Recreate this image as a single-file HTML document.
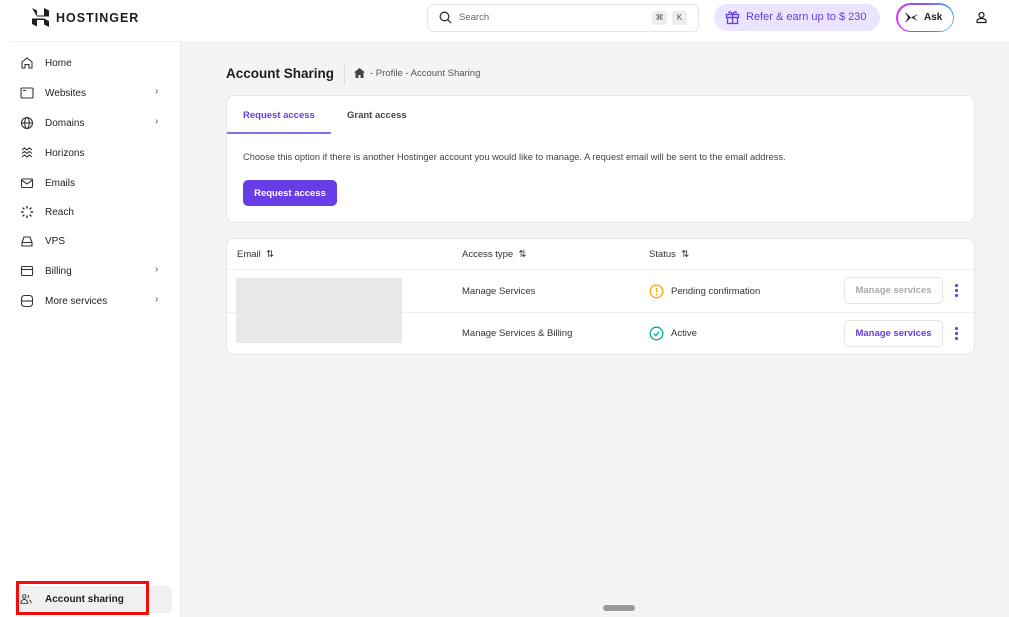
<!DOCTYPE html>
<html><head><meta charset="utf-8"><style>
*{box-sizing:border-box;margin:0;padding:0}
body{width:1009px;height:617px;overflow:hidden;font-family:"Liberation Sans",sans-serif;background:#fff;color:#1d1e20;position:relative}
.hdr{position:absolute;left:0;top:0;width:1009px;height:41px;background:#fff}
.side{position:absolute;left:0;top:41px;width:181px;height:576px;background:#fff;border-right:1px solid #e8e8ec}
.side .line{position:absolute;left:10px;right:0;top:0;border-top:1px solid #eee}
.main{position:absolute;left:181px;top:41px;right:0;bottom:0;background:#f4f4f4}
.nav{position:absolute;left:20px;font-size:10px;color:#2f1c6a;display:flex;align-items:center}
.nav svg{width:14px;height:14px;margin-right:11px}
.nav span{color:#1d1e20}
.chev{position:absolute;left:155px;font-size:10px;color:#555}
.card{position:absolute;background:#fff;border:1px solid #e6e6e6;border-radius:8px}
.t{position:absolute;font-size:9.5px;white-space:nowrap}
.btn{position:absolute;border:1px solid #e6e6e6;border-radius:5px;font-size:9.5px;font-weight:bold;display:flex;align-items:center;justify-content:center}
.dots{position:absolute;width:3px}
.dots i{display:block;width:2.5px;height:2.5px;border-radius:50%;background:#673de6;margin-bottom:2.5px}
</style></head><body>
<div class="hdr">
 <svg style="position:absolute;left:32px;top:8px" width="17" height="19" viewBox="0 0 17 19"><path d="M0 0l5 2.5v5l7 0V0l5 2.5V8.5H5zM0 10.5h12L17 13v6l-5-2.5v-4.5H5v6.5L0 16z" fill="#1d1e20"/></svg>
 <div class="t" style="left:56px;top:11px;font-size:12.5px;font-weight:bold;letter-spacing:1px">HOSTINGER</div>
 <div style="position:absolute;left:427px;top:4px;width:272px;height:28px;border:1px solid #e6e6e6;border-radius:7px"></div>
 <svg style="position:absolute;left:439px;top:11px" width="13" height="13" viewBox="0 0 13 13"><circle cx="5.5" cy="5.5" r="4.3" fill="none" stroke="#333" stroke-width="1.3"/><path d="M8.6 8.6l3.5 3.5" stroke="#333" stroke-width="1.3"/></svg>
 <div class="t" style="left:459px;top:12px;color:#666">Search</div>
 <div style="position:absolute;left:652px;top:11px;width:15px;height:14px;background:#eee;border-radius:3px;font-size:8px;text-align:center;line-height:14px;color:#555">⌘</div>
 <div style="position:absolute;left:672px;top:11px;width:15px;height:14px;background:#eee;border-radius:3px;font-size:8px;text-align:center;line-height:14px;color:#555">K</div>
 <div style="position:absolute;left:714px;top:4px;width:166px;height:27px;background:#ebe4ff;border-radius:14px"></div>
 <svg style="position:absolute;left:725px;top:10px" width="15" height="15" viewBox="0 0 15 15" fill="none" stroke="#673de6" stroke-width="1.3"><rect x="1.5" y="4.5" width="12" height="3"/><rect x="2.5" y="7.5" width="10" height="6"/><path d="M7.5 4.5v9M7.5 4.5C6 1 3 1.5 4 3.5M7.5 4.5C9 1 12 1.5 11 3.5"/></svg>
 <div class="t" style="left:746px;top:11px;font-size:11px;color:#673de6">Refer &amp; earn up to $ 230</div>
 <div style="position:absolute;left:896px;top:3px;width:58px;height:29px;border-radius:15px;background:linear-gradient(90deg,#d63af0,#7a5cff,#4fb0ff);padding:1.5px"><div style="width:100%;height:100%;background:#fff;border-radius:14px"></div></div>
 <svg style="position:absolute;left:905px;top:11px" width="13" height="13" viewBox="0 0 13 13"><path d="M0 1l6 5.5L0 12l3-5.5zM6 6.5L13 3 9 6.5 13 10z" fill="#1d1e20"/></svg>
 <div class="t" style="left:924px;top:12px;font-size:10px;font-weight:bold">Ask</div>
 <svg style="position:absolute;left:975px;top:11px" width="13" height="13" viewBox="0 0 13 13" fill="none" stroke="#1d1e20" stroke-width="1.2"><circle cx="6.5" cy="4" r="2.5"/><path d="M2 11.5h9v-1.5c0-1.5-2-2.5-4.5-2.5S2 8.5 2 10z"/></svg>
</div>
<div class="side"><div class="line"></div>
 <div style="position:absolute;left:15px;top:545px;width:157px;height:27px;background:#f0f0f0;border-radius:6px"></div>
</div>
<div class="nav" style="top:56px"><svg viewBox="0 0 14 14" fill="none" stroke="#333" stroke-width="1.1"><path d="M2 6l5-4 5 4v6H9V8.5H5V12H2z"/></svg><span>Home</span></div>
<div class="nav" style="top:86px"><svg viewBox="0 0 14 14" fill="none" stroke="#333" stroke-width="1.1"><rect x="1" y="2" width="12" height="10" rx="1"/><path d="M3 4.5h3"/></svg><span>Websites</span></div><div class="chev" style="top:86px">›</div>
<div class="nav" style="top:116px"><svg viewBox="0 0 14 14" fill="none" stroke="#333" stroke-width="1.1"><circle cx="7" cy="7" r="5.5"/><ellipse cx="7" cy="7" rx="2.3" ry="5.5"/><path d="M1.5 7h11"/></svg><span>Domains</span></div><div class="chev" style="top:116px">›</div>
<div class="nav" style="top:146px"><svg viewBox="0 0 14 14" fill="none" stroke="#333" stroke-width="1.1"><path d="M2 4l2.5-2 2.5 2 2.5-2L12 4M2 7.5l2.5-2 2.5 2 2.5-2L12 7.5M2 11l2.5-2 2.5 2 2.5-2L12 11"/></svg><span>Horizons</span></div>
<div class="nav" style="top:176px"><svg viewBox="0 0 14 14" fill="none" stroke="#333" stroke-width="1.1"><rect x="1.5" y="3" width="11" height="8.5" rx="1"/><path d="M1.5 4l5.5 4 5.5-4"/></svg><span>Emails</span></div>
<div class="nav" style="top:205px"><svg viewBox="0 0 14 14" fill="none" stroke="#333" stroke-width="1.4" stroke-linecap="round"><path d="M7 1.5v1.5M7 11v1.5M1.5 7h1.5M11 7h1.5M3 3l1 1M10 10l1 1M3 11l1-1M10 4l1-1"/></svg><span>Reach</span></div>
<div class="nav" style="top:234px"><svg viewBox="0 0 14 14" fill="none" stroke="#333" stroke-width="1.1"><path d="M2 8.5L4 3h6l2 5.5M2 8.5h10V12H2z"/></svg><span>VPS</span></div>
<div class="nav" style="top:264px"><svg viewBox="0 0 14 14" fill="none" stroke="#333" stroke-width="1.1"><rect x="1.5" y="2.5" width="11" height="9" rx="1"/><path d="M1.5 5.5h11"/></svg><span>Billing</span></div><div class="chev" style="top:264px">›</div>
<div class="nav" style="top:294px"><svg viewBox="0 0 14 14" fill="none" stroke="#333" stroke-width="1.1"><rect x="1.5" y="1.5" width="11" height="11" rx="3"/><path d="M1.5 7h11"/></svg><span>More services</span></div><div class="chev" style="top:294px">›</div>
<div class="nav" style="top:592px;font-weight:bold"><svg viewBox="0 0 14 14" fill="none" stroke="#333" stroke-width="1.1" style="width:12px"><circle cx="5" cy="4" r="2"/><path d="M1 12c0-3 2-4.5 4-4.5s4 1.5 4 4.5zM9 2.5a2 2 0 010 3.5M11 8c1 .7 2 2 2 4"/></svg><span style="margin-left:2px">Account sharing</span></div>
<div style="position:absolute;left:16px;top:581px;width:133px;height:34px;border:3px solid #f20c0c"></div>
<div class="main"></div>
<div class="t" style="left:226px;top:66px;font-size:13.5px;font-weight:bold">Account Sharing</div>
<div style="position:absolute;left:344px;top:63px;width:1px;height:22px;background:#ddd"></div>
<svg style="position:absolute;left:354px;top:68px" width="11" height="10" viewBox="0 0 11 10"><path d="M5.5 0L11 4.5H9.5V10h-3V7h-2v3h-3V4.5H0z" fill="#444"/></svg>
<div class="t" style="left:370px;top:68px;font-size:9.5px;color:#555">- Profile - Account Sharing</div>
<div class="card" style="left:226px;top:95px;width:749px;height:128px">
 <div class="t" style="left:16px;top:14px;color:#673de6;font-weight:bold;font-size:9.5px">Request access</div>
 <div style="position:absolute;left:0;top:36px;width:104px;height:2px;background:#8c6cf0"></div>
 <div class="t" style="left:120px;top:14px;color:#444;font-weight:bold;font-size:9.5px">Grant access</div>
 <div class="t" style="left:16px;top:56px;color:#444;font-size:9.3px">Choose this option if there is another Hostinger account you would like to manage. A request email will be sent to the email address.</div>
 <div class="btn" style="left:16px;top:84px;width:94px;height:26px;background:#673de6;border:none;color:#fff">Request access</div>
</div>
<div class="card" style="left:226px;top:238px;width:749px;height:117px">
 <div class="t" style="left:10px;top:10px;color:#333">Email &nbsp;⇅</div>
 <div class="t" style="left:235px;top:10px;color:#333">Access type &nbsp;⇅</div>
 <div class="t" style="left:422px;top:10px;color:#333">Status &nbsp;⇅</div>
 <div style="position:absolute;left:0;right:0;top:30px;border-top:1px solid #eee"></div>
 <div style="position:absolute;left:0;right:0;top:73px;border-top:1px solid #eee"></div>
 <div style="position:absolute;left:9px;top:39px;width:166px;height:65px;background:#e8e8e8"></div>
 <div class="t" style="left:235px;top:47px;color:#333">Manage Services</div>
 <div class="t" style="left:235px;top:89px;color:#333">Manage Services &amp; Billing</div>
 <svg style="position:absolute;left:422px;top:45px" width="15" height="15" viewBox="0 0 15 15"><circle cx="7.5" cy="7.5" r="6.3" fill="none" stroke="#ffa500" stroke-width="1.3"/><path d="M7.5 4v4.3" stroke="#ffa500" stroke-width="1.4"/><circle cx="7.5" cy="10.5" r=".8" fill="#ffa500"/></svg>
 <div class="t" style="left:444px;top:47px;color:#333">Pending confirmation</div>
 <svg style="position:absolute;left:422px;top:87px" width="15" height="15" viewBox="0 0 15 15" fill="none" stroke="#00b090" stroke-width="1.3"><circle cx="7.5" cy="7.5" r="6.3"/><path d="M4.8 7.6l2 2 3.5-3.7"/></svg>
 <div class="t" style="left:444px;top:89px;color:#333">Active</div>
 <div class="btn" style="left:617px;top:38px;width:99px;height:27px;color:#aaa">Manage services</div>
 <div class="btn" style="left:617px;top:81px;width:99px;height:27px;color:#673de6">Manage services</div>
 <div class="dots" style="left:728px;top:45px"><i></i><i></i><i></i></div>
 <div class="dots" style="left:728px;top:88px"><i></i><i></i><i></i></div>
</div>
<div style="position:absolute;left:603px;top:605px;width:32px;height:6px;border-radius:3px;background:#999"></div>
</body></html>
